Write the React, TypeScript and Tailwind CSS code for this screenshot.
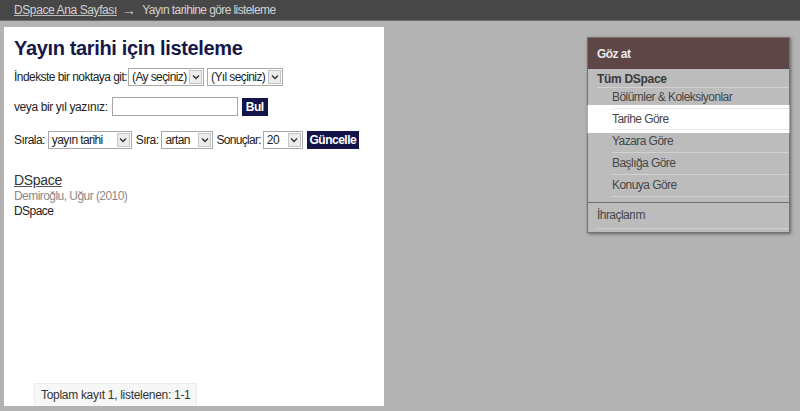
import React from "react";

const F = { fontFamily: '"Liberation Sans", Arial, sans-serif' };

function Chevron() {
  return (
    <svg width="8" height="6" viewBox="0 0 8 6">
      <polyline points="1,1.5 4,4.5 7,1.5" fill="none" stroke="#333" strokeWidth="1.4" />
    </svg>
  );
}

function Sel({ label, w }: { label: string; w: string }) {
  return (
    <div className={`flex h-[18px] ${w} items-stretch border border-[#a9a9a9] bg-white`}>
      <div className="flex flex-1 items-center pl-[3px] text-[12px] tracking-[-0.6px] text-[#222] overflow-hidden whitespace-nowrap">
        {label}
      </div>
      <div className="m-[1px] flex w-[13px] items-center justify-center border border-[#c4c4c4] bg-[#ececec]">
        <Chevron />
      </div>
    </div>
  );
}

function Btn({ label, w }: { label: string; w: string }) {
  return (
    <div className={`flex h-[18px] ${w} items-center justify-center bg-[#14144b] text-[12px] font-bold tracking-[-0.5px] text-white`}>
      {label}
    </div>
  );
}

export default function App() {
  const items = ["Bölümler & Koleksiyonlar", "Tarihe Göre", "Yazara Göre", "Başlığa Göre", "Konuya Göre"];
  return (
    <div style={F} className="flex h-[411px] w-[800px] flex-col overflow-hidden bg-[#b3b3b3] text-[12px] tracking-[-0.55px]">
      <div className="flex h-[21px] shrink-0 items-center border-b border-[#6a6a6a] bg-[#474747] pl-[14px] text-[12px] text-[#d2d2d2]">
        <span className="underline decoration-[#bbb] tracking-[-0.4px]">DSpace Ana Sayfası</span>
        <span className="ml-[5px] mr-[7px] text-[14px] leading-[12px] text-[#cfcfcf]">→</span>
        <span className="tracking-[-0.6px]">Yayın tarihine göre listeleme</span>
      </div>
      <div className="flex flex-1 pl-[4px] pt-[6px]">
        <div className="flex h-[379px] w-[380px] flex-col bg-white pl-[10px] pt-[8px]">
          <h1 className="text-[20px] font-bold leading-[26px] tracking-[-0.35px] text-[#17174a]">
            Yayın tarihi için listeleme
          </h1>
          <div className="mt-[7px] flex items-center text-[#222]">
            <span>İndekste bir noktaya git:</span>
            <div className="ml-[1px]"><Sel label="(Ay seçiniz)" w="w-[76px]" /></div>
            <div className="ml-[3px]"><Sel label="(Yıl seçiniz)" w="w-[76px]" /></div>
          </div>
          <div className="mt-[11px] flex items-center text-[#222]">
            <span className="tracking-[-0.4px]">veya bir yıl yazınız:</span>
            <div className="ml-[4px] h-[19px] w-[126px] border border-[#a5a5a5] bg-white" />
            <div className="ml-[4px]"><Btn label="Bul" w="w-[26px]" /></div>
          </div>
          <div className="mt-[15px] flex items-center text-[#222]">
            <span>Sırala:</span>
            <div className="ml-[3px]"><Sel label="yayın tarihi" w="w-[84px]" /></div>
            <span className="ml-[4px]">Sıra:</span>
            <div className="ml-[3px]"><Sel label="artan" w="w-[52px]" /></div>
            <span className="ml-[3px] tracking-[-0.7px]">Sonuçlar:</span>
            <div className="ml-[2px]"><Sel label="20" w="w-[40px]" /></div>
            <div className="ml-[4px]"><Btn label="Güncelle" w="w-[52px]" /></div>
          </div>
          <div className="mt-[23px] text-[14px] leading-[17px] tracking-[-0.3px] text-[#333] underline decoration-[#555]">
            DSpace
          </div>
          <div className="leading-[15px] text-[#8a8a8a]">Demiroğlu, Uğur (2010)</div>
          <div className="leading-[15px] text-[#1a1a1a]">DSpace</div>
          <div className="mt-auto ml-[20px] flex h-[23px] w-[163px] items-center border border-b-0 border-[#ececec] bg-[#f7f7f7] pl-[6px] tracking-[-0.3px] text-[#333]">
            Toplam kayıt 1, listelenen: 1-1
          </div>
        </div>
        <div className="ml-auto mr-[10px] mt-[10px] h-[196px] w-[203px] border border-[#747474] bg-[#bcbcbc] shadow-[1px_1px_3px_rgba(0,0,0,0.45)]">
          <div className="flex h-[31px] items-center bg-[#5d4645] pl-[9px] text-[12px] font-bold text-[#eaeaea]">
            Göz at
          </div>
          <div className="ml-[9px] h-[19px] border-b border-[#d2d2d2] pt-[3px] text-[12px] font-bold leading-[15px] tracking-[-0.3px] text-[#3a3a3a]">
            Tüm DSpace
          </div>
          <ul>
            {items.map((it, i) => {
              const first = i === 0;
              const active = it === "Tarihe Göre";
              return (
                <li
                  key={it}
                  className={`relative ml-[24px] border-b border-[#d2d2d2] text-[#474747] ${first ? "h-[21px] leading-[18px]" : "h-[22px] leading-[21px]"}`}
                >
                  {active && (
                    <div className="absolute -left-[25px] -right-[1px] -top-[4px] -bottom-[3px] border-l border-r border-[#c9a3a3] bg-white">
                      <div className="absolute left-[25px] right-0 top-[3px] h-px bg-[#e8e8e8]" />
                      <div className="absolute left-[25px] right-0 bottom-[3px] h-px bg-[#e8e8e8]" />
                    </div>
                  )}
                  <span className="relative">{it}</span>
                </li>
              );
            })}
          </ul>
          <div className="mt-[5px] border-t border-[#6e6e6e]">
            <div className="ml-[9px] h-[26px] border-b border-[#d2d2d2] leading-[25px] text-[#474747]">
              İhraçlarım
            </div>
          </div>
        </div>
      </div>
    </div>
  );
}
